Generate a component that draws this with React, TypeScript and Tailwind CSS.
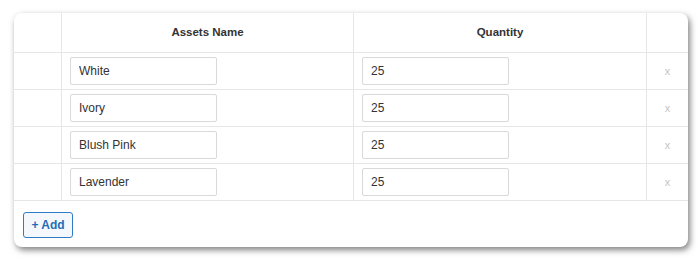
import { useState } from 'react';

interface AssetRow {
  id: number;
  name: string;
  quantity: string;
}

const initialRows: AssetRow[] = [
  { id: 1, name: 'White', quantity: '25' },
  { id: 2, name: 'Ivory', quantity: '25' },
  { id: 3, name: 'Blush Pink', quantity: '25' },
  { id: 4, name: 'Lavender', quantity: '25' },
];

const gridCols = 'grid grid-cols-[48px_292px_293px_1fr]';

const App = () => {
  const [rows, setRows] = useState<AssetRow[]>(initialRows);

  const updateRow = (id: number, field: 'name' | 'quantity', value: string) => {
    setRows(prev => prev.map(r => (r.id === id ? { ...r, [field]: value } : r)));
  };

  const removeRow = (id: number) => {
    setRows(prev => prev.filter(r => r.id !== id));
  };

  const addRow = () => {
    setRows(prev => [...prev, { id: Date.now(), name: '', quantity: '' }]);
  };

  return (
    <div className="w-[700px] h-[260px] bg-white pt-[13px] pl-[14px] font-['Liberation_Sans',Arial,sans-serif]">
      <div className="w-[674px] h-[234px] bg-white rounded-[8px] overflow-hidden shadow-[2px_3px_6px_rgba(0,0,0,0.5)]">
        {/* Header */}
        <div className={`${gridCols} h-[40px] border-b border-[#e6e6e6]`}>
          <div className="border-r border-[#e6e6e6]" />
          <div className="flex items-center justify-center text-[11.5px] font-bold text-[#333] border-r border-[#e6e6e6]">
            Assets Name
          </div>
          <div className="flex items-center justify-center text-[11.5px] font-bold text-[#333] border-r border-[#e6e6e6]">
            Quantity
          </div>
          <div />
        </div>

        {/* Rows */}
        {rows.map(row => (
          <div key={row.id} className={`${gridCols} h-[37px] border-b border-[#e6e6e6]`}>
            <div className="border-r border-[#e6e6e6]" />
            <div className="flex items-center pl-[8px] border-r border-[#e6e6e6]">
              <input
                value={row.name}
                onChange={e => updateRow(row.id, 'name', e.target.value)}
                className="w-[147px] h-[28px] px-[8px] text-[12px] text-[#333] border border-[#d9d9d9] rounded-[2px] outline-none"
              />
            </div>
            <div className="flex items-center pl-[8px] border-r border-[#e6e6e6]">
              <input
                value={row.quantity}
                onChange={e => updateRow(row.id, 'quantity', e.target.value)}
                className="w-[147px] h-[28px] px-[8px] text-[12px] text-[#333] border border-[#d9d9d9] rounded-[2px] outline-none"
              />
            </div>
            <div className="flex items-center justify-center">
              <button
                onClick={() => removeRow(row.id)}
                className="text-[11px] text-[#c4c4c4] leading-none"
              >
                x
              </button>
            </div>
          </div>
        ))}

        {/* Footer */}
        <div className="pt-[11px] pl-[9px]">
          <button
            onClick={addRow}
            className="h-[26px] w-[50px] flex items-center justify-center text-[12px] font-bold text-[#1f6db5] bg-[#f4f8fc] border border-[#2f7bc4] rounded-[3px]"
          >
            + Add
          </button>
        </div>
      </div>
    </div>
  );
};

export default App;
